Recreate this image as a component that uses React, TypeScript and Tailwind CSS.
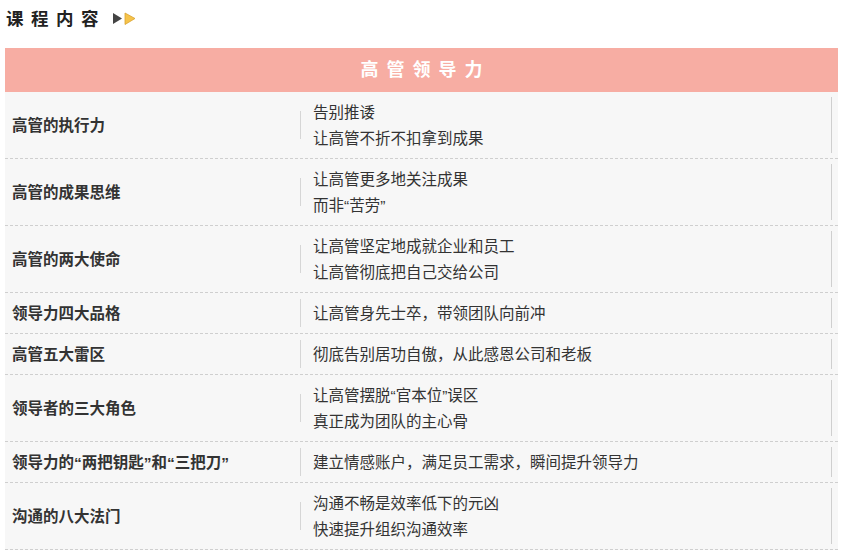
import React from 'react';

interface Row {
  title: string;
  lines: string[];
}

const rows: Row[] = [
  { title: '高管的执行力', lines: ['告别推诿', '让高管不折不扣拿到成果'] },
  { title: '高管的成果思维', lines: ['让高管更多地关注成果', '而非“苦劳”'] },
  { title: '高管的两大使命', lines: ['让高管坚定地成就企业和员工', '让高管彻底把自己交给公司'] },
  { title: '领导力四大品格', lines: ['让高管身先士卒，带领团队向前冲'] },
  { title: '高管五大雷区', lines: ['彻底告别居功自傲，从此感恩公司和老板'] },
  { title: '领导者的三大角色', lines: ['让高管摆脱“官本位”误区', '真正成为团队的主心骨'] },
  { title: '领导力的“两把钥匙”和“三把刀”', lines: ['建立情感账户，满足员工需求，瞬间提升领导力'] },
  { title: '沟通的八大法门', lines: ['沟通不畅是效率低下的元凶', '快速提升组织沟通效率'] },
];

const App: React.FC = () => {
  return (
    <div
      className="w-[844px] h-[555px] bg-white text-[#333] overflow-hidden"
      style={{ fontFamily: '"Liberation Sans", "Noto Sans CJK SC", sans-serif' }}
    >
      {/* Section heading */}
      <div className="flex items-center h-[38px] pl-[6px]">
        <span className="text-[17.5px] font-bold tracking-[7.5px] text-[#222]">课程内容</span>
        <svg width="26" height="14" viewBox="0 0 26 14" className="ml-[6px]">
          <polygon points="1,1 10,6.5 1,12" fill="#444" />
          <polygon points="13,1 23,6.5 13,12.5" fill="#f6c34a" stroke="#d9a22e" strokeWidth="0.8" />
        </svg>
      </div>

      {/* Table */}
      <div className="mx-[5px] mt-[10px] w-[833px]">
        <div className="h-[44px] bg-[#f7ada3] flex items-center justify-center">
          <span className="text-[18px] font-bold text-white tracking-[8px] pl-[8px]">高管领导力</span>
        </div>
        <div className="bg-[#f7f7f7]">
          {rows.map((row) => (
            <div key={row.title} className="flex border-b border-dashed border-[#cfcfcf]">
              <div className="w-[295px] pl-[7px] pt-[1px] flex items-center text-[15.5px] font-bold">
                {row.title}
              </div>
              <div className="w-px h-[28px] bg-[#d6d6d6] self-center" />
              <div className="flex-1 pl-[12px] pt-[8px] pb-[6px] text-[15.5px] leading-[26px]">
                {row.lines.map((l) => (
                  <div key={l}>{l}</div>
                ))}
              </div>
              <div className="w-px bg-[#cfcfcf] my-[5px] mr-[6px]" />
            </div>
          ))}
        </div>
      </div>
    </div>
  );
};

export default App;
